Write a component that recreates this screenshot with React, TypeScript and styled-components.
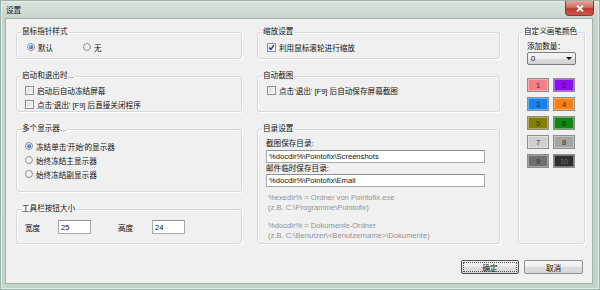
import styled, { createGlobalStyle } from 'styled-components';

const GlobalStyle = createGlobalStyle`
  html, body {
    margin: 0;
    padding: 0;
    background: #ffffff;
  }
  body {
    font-family: "Liberation Sans", "Noto Sans CJK SC", sans-serif;
    font-size: 7.6px;
    color: #000;
  }
  * {
    box-sizing: border-box;
  }
`;

const Window = styled.div`
  width: 600px;
  height: 290px;
  display: flex;
  flex-direction: column;
  background: linear-gradient(to bottom, #dae5df 0px, #c6d6cd 18px, #c2d3c9 100%);
  box-shadow: inset 0 0 0 1px #9db2a6, inset 0 0 0 2px #e4ece8;
`;

const TitleBar = styled.div`
  height: 18px;
  display: flex;
  align-items: center;
  justify-content: space-between;
  padding: 0 6px 0 6px;
  flex-shrink: 0;
`;

const Title = styled.span`
  font-family: "Noto Sans CJK SC", sans-serif;
  font-size: 7.6px;
  color: #111;
  margin-top: 1px;
`;

const CloseButton = styled.div`
  width: 29px;
  height: 15px;
  align-self: flex-start;
  margin-top: 1px;
  border: 1px solid #8a3a32;
  border-top: none;
  border-radius: 0 0 4px 4px;
  background: linear-gradient(to bottom, #e6a99f 0%, #d26a5e 45%, #bf3b2e 55%, #c9584a 100%);
  display: flex;
  align-items: center;
  justify-content: center;
`;

const Client = styled.div`
  flex: 1;
  margin: 0 7px 6px 5px;
  border: 1px solid #9fb3a7;
  background: #f0f0f0;
  display: flex;
  flex-direction: column;
`;

const Columns = styled.div`
  display: flex;
  gap: 15px;
  padding: 8px 0 0 10px;
  height: 225px;
`;

const Column = styled.div<{ $width: number; $shift?: number }>`
  width: ${p => p.$width}px;
  margin-left: ${p => p.$shift || 0}px;
  display: flex;
  flex-direction: column;
  gap: 12px;
`;

const Group = styled.fieldset<{ $height: number; $padRight?: number }>`
  margin: 0;
  padding: 0 ${p => p.$padRight ?? 8}px 0 8px;
  height: ${p => p.$height}px;
  border: 1px solid #d6d9dc;
  border-radius: 3px;
  box-shadow: 1px 1px 0 #ffffff, inset 1px 1px 0 #ffffff;
  min-width: 0;
`;

const Legend = styled.legend`
  margin-left: -4px;
  padding: 0 1px;
  line-height: 10px;
  height: 10px;
  font-size: 7.6px;
  color: #111;
  white-space: nowrap;
`;

const Body = styled.div<{ $top: number }>`
  padding-top: ${p => p.$top}px;
  display: flex;
  flex-direction: column;
  gap: 2px;
`;

const Row = styled.div<{ $indent?: number }>`
  height: 12px;
  display: flex;
  align-items: center;
  margin-left: ${p => p.$indent || 0}px;
  white-space: nowrap;
`;

const Choice = styled.label<{ $width?: number }>`
  display: flex;
  align-items: center;
  gap: 3px;
  width: ${p => (p.$width ? `${p.$width}px` : 'auto')};
  color: #111;
`;

const RadioDot = styled.span<{ $on?: boolean }>`
  width: 8px;
  height: 8px;
  border-radius: 50%;
  border: 1px solid #8e9397;
  background: radial-gradient(circle at 40% 40%, #ffffff 0%, #e2e4e6 80%);
  display: flex;
  align-items: center;
  justify-content: center;
  &::after {
    content: '';
    display: ${p => (p.$on ? 'block' : 'none')};
    width: 4px;
    height: 4px;
    border-radius: 50%;
    background: radial-gradient(circle at 35% 35%, #7fb6f0 0%, #2a64b8 70%, #1d4a8c 100%);
  }
`;

const CheckBox = styled.span`
  width: 9px;
  height: 9px;
  border: 1px solid #8e8f8f;
  background: linear-gradient(to bottom right, #dcdcdc 0%, #f6f6f6 100%);
  box-shadow: inset 0 0 0 1px #f4f4f4;
  display: flex;
  align-items: center;
  justify-content: center;
`;

const FieldRow = styled.div`
  display: flex;
  align-items: center;
  height: 14px;
`;

const FieldLabel = styled.span<{ $width: number; $gap?: number }>`
  width: ${p => p.$width}px;
  margin-left: ${p => p.$gap || 0}px;
  color: #111;
`;

const TextBox = styled.div<{ $width: number; $height?: number }>`
  width: ${p => p.$width}px;
  height: ${p => p.$height || 14}px;
  border: 1px solid #a6a9ad;
  border-top-color: #8b8f94;
  background: #fff;
  padding-left: 2px;
  display: flex;
  align-items: center;
  color: #111;
  white-space: nowrap;
  overflow: hidden;
`;

const DirLabel = styled.div<{ $top: number }>`
  line-height: 10px;
  height: 10px;
  margin-top: ${p => p.$top}px;
  color: #111;
  white-space: nowrap;
`;

const Hint = styled.div<{ $top: number }>`
  margin-top: ${p => p.$top}px;
  padding-left: 2px;
  color: #959595;
  line-height: 10px;
  white-space: nowrap;
`;

const Select = styled.div`
  width: 49px;
  height: 13px;
  border: 1px solid #7e7e7e;
  border-radius: 2px;
  background: linear-gradient(to bottom, #f4f4f4 0%, #ebebeb 50%, #dcdcdc 51%, #d2d2d2 100%);
  display: flex;
  align-items: center;
  justify-content: space-between;
  padding: 0 3px 0 3px;
  color: #111;
`;

const Arrow = styled.span`
  width: 0;
  height: 0;
  border-left: 3px solid transparent;
  border-right: 3px solid transparent;
  border-top: 3px solid #111;
`;

const Swatches = styled.div`
  margin-top: 13px;
  display: grid;
  grid-template-columns: 22px 22px;
  column-gap: 4px;
  row-gap: 5px;
`;

const Swatch = styled.div<{ $color: string; $ink: string }>`
  height: 14px;
  border: 1px solid #8d8d8d;
  box-shadow: inset 0 0 0 1px rgba(255, 255, 255, 0.35);
  background: ${p => p.$color};
  color: ${p => p.$ink};
  display: flex;
  align-items: center;
  justify-content: center;
  font-size: 7.4px;
`;

const Footer = styled.div`
  display: flex;
  justify-content: flex-end;
  gap: 5px;
  padding: 16px 9px 0 0;
`;

const Button = styled.div<{ $default?: boolean }>`
  width: ${p => (p.$default ? 58 : 59)}px;
  height: 14px;
  border: 1px solid ${p => (p.$default ? '#4d4d4d' : '#8f8f8f')};
  border-radius: 2px;
  background: linear-gradient(to bottom, #f7f7f7 0%, #ececec 50%, #dedede 51%, #d6d6d6 100%);
  display: flex;
  align-items: center;
  justify-content: center;
  color: #111;
  outline: ${p => (p.$default ? '1px dotted #555' : 'none')};
  outline-offset: -3px;
`;

const swatches = [
  { color: '#f57f86', ink: '#3a2a2a' },
  { color: '#8a0cf0', ink: '#2a1a3a' },
  { color: '#1682f0', ink: '#1a2a3a' },
  { color: '#fb7e10', ink: '#3a2a1a' },
  { color: '#868000', ink: '#2e2a00' },
  { color: '#128513', ink: '#0a2a0a' },
  { color: '#cfcfcf', ink: '#333333' },
  { color: '#a4a4a4', ink: '#2a2a2a' },
  { color: '#707070', ink: '#2a2a2a' },
  { color: '#2e2e2e', ink: '#6e6e6e' },
];

function Check() {
  return (
    <CheckBox>
      <svg width="7" height="7" viewBox="0 0 7 7">
        <path d="M1 3.6 L2.8 5.4 L6 1.2" stroke="#1f3f8a" strokeWidth="1.4" fill="none" />
      </svg>
    </CheckBox>
  );
}

export default function App() {
  return (
    <>
      <GlobalStyle />
      <Window>
        <TitleBar>
          <Title>设置</Title>
          <CloseButton>
            <svg width="8" height="7" viewBox="0 0 8 7">
              <path d="M1 0.5 L7 6.5 M7 0.5 L1 6.5" stroke="#fff" strokeWidth="1.8" />
            </svg>
          </CloseButton>
        </TitleBar>
        <Client>
          <Columns>
            <Column $width={226}>
              <Group $height={32}>
                <Legend>鼠标指针样式</Legend>
                <Body $top={4}>
                  <Row $indent={2}>
                    <Choice $width={56}><RadioDot $on />默认</Choice>
                    <Choice><RadioDot />无</Choice>
                  </Row>
                </Body>
              </Group>
              <Group $height={41}>
                <Legend>启动和退出时...</Legend>
                <Body $top={3}>
                  <Row><Choice><CheckBox />启动后自动冻结屏幕</Choice></Row>
                  <Row><Choice><CheckBox />点击'退出' [F9] 后直接关闭程序</Choice></Row>
                </Body>
              </Group>
              <Group $height={68}>
                <Legend>多个显示器...</Legend>
                <Body $top={6}>
                  <Row><Choice><RadioDot $on />冻结单击'开始'的显示器</Choice></Row>
                  <Row><Choice><RadioDot />始终冻结主显示器</Choice></Row>
                  <Row><Choice><RadioDot />始终冻结副显示器</Choice></Row>
                </Body>
              </Group>
              <Group $height={40}>
                <Legend>工具栏按钮大小</Legend>
                <Body $top={6}>
                  <FieldRow>
                    <FieldLabel $width={33}>宽度</FieldLabel>
                    <TextBox $width={33}>25</TextBox>
                    <FieldLabel $width={34} $gap={27}>高度</FieldLabel>
                    <TextBox $width={33}>24</TextBox>
                  </FieldRow>
                </Body>
              </Group>
            </Column>
            <Column $width={243}>
              <Group $height={32}>
                <Legend>缩放设置</Legend>
                <Body $top={4}>
                  <Row $indent={1}><Choice><Check />利用鼠标滚轮进行缩放</Choice></Row>
                </Body>
              </Group>
              <Group $height={41}>
                <Legend>自动截图</Legend>
                <Body $top={3}>
                  <Row $indent={1}><Choice><CheckBox />点击'退出' [F9] 后自动保存屏幕截图</Choice></Row>
                </Body>
              </Group>
              <Group $height={120}>
                <Legend>目录设置</Legend>
                <DirLabel $top={5}>截图保存目录:</DirLabel>
                <TextBox $width={219} $height={13} style={{ marginTop: 1 }}>%docdir%\Pointofix\Screenshots</TextBox>
                <DirLabel $top={1}>邮件临时保存目录:</DirLabel>
                <TextBox $width={219} $height={13}>%docdir%\Pointofix\Email</TextBox>
                <Hint $top={6}>
                  %exedir% = Ordner von Pointofix.exe<br />
                  (z.B. C:\Programme\Pointofix)
                </Hint>
                <Hint $top={8}>
                  %docdir% = Dokumente-Ordner<br />
                  (z.B. C:\Benutzer\&lt;Benutzername&gt;\Dokumente)
                </Hint>
              </Group>
            </Column>
            <Column $width={67} $shift={3}>
              <Group $height={217} $padRight={3}>
                <Legend>自定义画笔颜色</Legend>
                <DirLabel $top={5}>添加数量：</DirLabel>
                <Select>0<Arrow /></Select>
                <Swatches>
                  {swatches.map((s, i) => (
                    <Swatch key={i} $color={s.color} $ink={s.ink}>{i + 1}</Swatch>
                  ))}
                </Swatches>
              </Group>
            </Column>
          </Columns>
          <Footer>
            <Button $default>确定</Button>
            <Button>取消</Button>
          </Footer>
        </Client>
      </Window>
    </>
  );
}
